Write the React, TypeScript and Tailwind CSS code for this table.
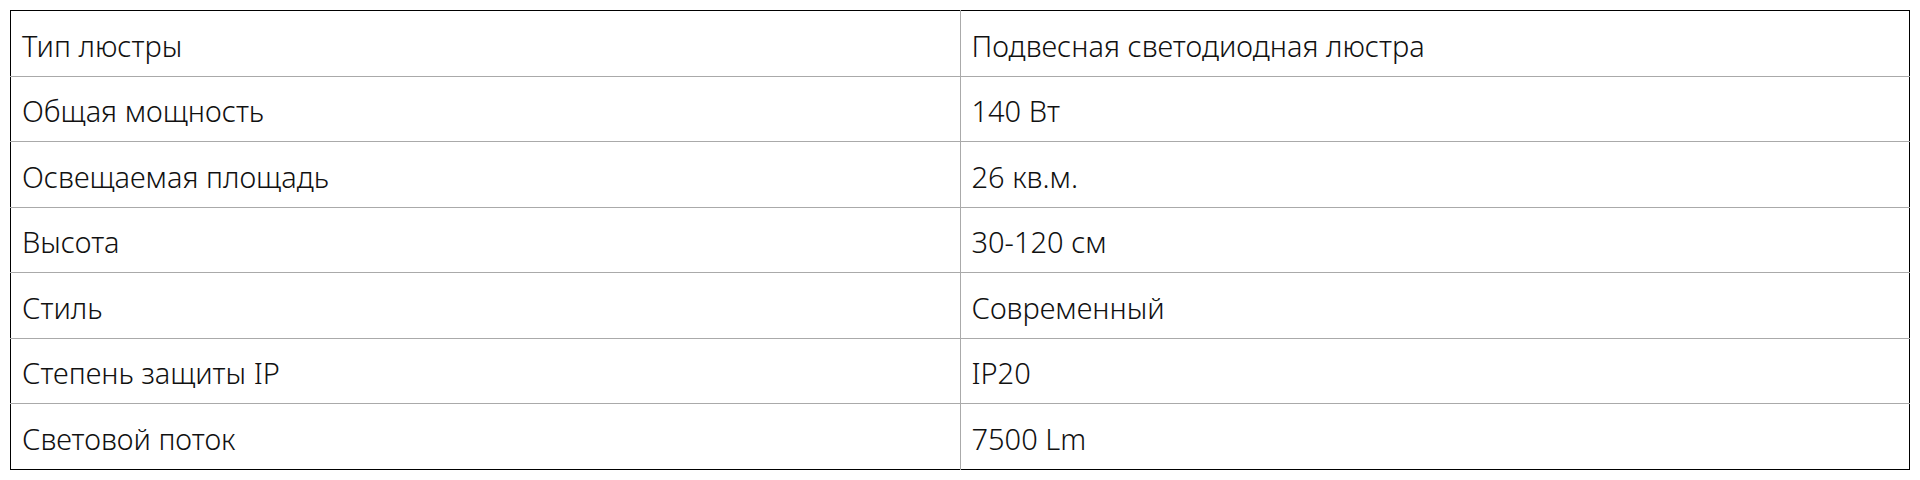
const rows: [string, string][] = [
  ["Тип люстры", "Подвесная светодиодная люстра"],
  ["Общая мощность", "140 Вт"],
  ["Освещаемая площадь", "26 кв.м."],
  ["Высота", "30-120 см"],
  ["Стиль", "Современный"],
  ["Степень защиты IP", "IP20"],
  ["Световой поток", "7500 Lm"],
];

export default function App() {
  return (
    <div className="min-h-screen bg-white p-[10px] font-['Noto_Sans',sans-serif] font-[350] text-[29px] text-[#111]">
      <table className="w-full table-fixed border-collapse border border-black">
        <tbody>
          {rows.map(([name, value]) => (
            <tr key={name} className="h-[65.5px] border-t border-[#aaa] first:border-t-0">
              <td className="border-r border-[#aaa] px-[11px] pt-[4px] align-middle leading-none">{name}</td>
              <td className="px-[11px] pt-[4px] align-middle leading-none">{value}</td>
            </tr>
          ))}
        </tbody>
      </table>
    </div>
  );
}
